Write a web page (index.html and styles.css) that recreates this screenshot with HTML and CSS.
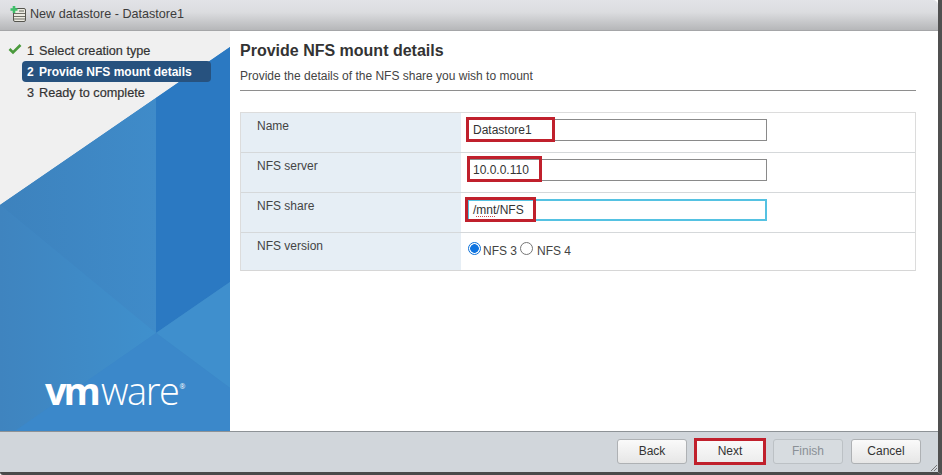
FILE: index.html
```html
<!DOCTYPE html>
<html lang="en">
<head>
<meta charset="utf-8">
<title>New datastore - Datastore1</title>
<link rel="stylesheet" href="styles.css">
</head>
<body>
<div class="dialog">
  <header class="titlebar">
    <svg class="title-icon" width="18" height="18" viewBox="0 0 18 18">
      <rect x="4.5" y="3.5" width="12" height="13" rx="1.5" fill="#ecebe2" stroke="#55554e"/>
      <path d="M5 8.5h11M5 11.5h11M5 14h11" stroke="#6f6f67" fill="none"/>
      <rect x="10" y="5" width="5" height="2" fill="#a9a99f"/>
      <path d="M5 1v7M1.5 4.5h7" stroke="#3fbf6a" stroke-width="2.6" fill="none"/>
    </svg>
    <span>New datastore - Datastore1</span>
  </header>
  <div class="body">
    <aside class="sidebar">
      <svg class="art" width="230" height="400" viewBox="0 0 230 400">
        <defs>
          <linearGradient id="upper" x1="0" x2="1" y1="0" y2="0">
            <stop offset="0" stop-color="#3d82bd"/><stop offset="1" stop-color="#3f8bc9"/>
          </linearGradient>
          <linearGradient id="lower" x1="0" x2="1" y1="0" y2="0">
            <stop offset="0" stop-color="#3f84bf"/><stop offset="1" stop-color="#3f90cd"/>
          </linearGradient>
        </defs>
        <polygon points="0,174 230,16 230,400 0,400" fill="#3d87c6"/>
        <polygon points="0,174 156,67 156,302" fill="url(#upper)"/>
        <polygon points="0,174 156,302 15,400 0,400" fill="url(#lower)"/>
        <polygon points="156,67 230,16 230,251 156,302" fill="#2b79c2"/>
        <polygon points="156,302 230,251 230,357" fill="#3f8fcd"/>
        <polygon points="156,302 230,357 230,400 15,400" fill="#3b88ca"/>
      </svg>
      <ol class="steps">
        <li class="step done">
          <svg class="check" width="14" height="12" viewBox="0 0 14 12"><path d="M1.5 6l3.5 3.5L12.5 2" fill="none" stroke="#4a9a3c" stroke-width="2.6"/></svg>
          <span class="num">1</span><span>Select creation type</span>
        </li>
        <li class="step current"><span class="num">2</span><span>Provide NFS mount details</span></li>
        <li class="step"><span class="num">3</span><span>Ready to complete</span></li>
      </ol>
      <div class="logo"><span class="vm">vm</span><span class="ware">ware</span><sup class="reg">®</sup></div>
    </aside>
    <main class="content">
      <h1 class="heading">Provide NFS mount details</h1>
      <p class="subhead">Provide the details of the NFS share you wish to mount</p>
      <div class="form">
        <div class="row">
          <div class="label">Name</div>
          <div class="field">
            <div class="input">Datastore1</div>
            <i class="mark mark-name"></i>
          </div>
        </div>
        <div class="row">
          <div class="label">NFS server</div>
          <div class="field">
            <div class="input">10.0.0.110</div>
            <i class="mark mark-server"></i>
          </div>
        </div>
        <div class="row">
          <div class="label">NFS share</div>
          <div class="field">
            <div class="input focused">/<span class="typo">mnt</span>/NFS</div>
            <i class="mark mark-share"></i>
          </div>
        </div>
        <div class="row last">
          <div class="label">NFS version</div>
          <div class="field radios">
            <span class="radio on"></span><span class="radio-text">NFS 3</span>
            <span class="radio off"></span><span class="radio-text">NFS 4</span>
          </div>
        </div>
      </div>
    </main>
  </div>
  <footer class="footer">
    <button class="btn">Back</button>
    <button class="btn next">Next</button>
    <button class="btn disabled">Finish</button>
    <button class="btn cancel">Cancel</button>
    <svg class="grip" width="7" height="7" viewBox="0 0 7 7"><path d="M1 7l6-6M4 7l3-3" stroke="#777" fill="none"/></svg>
  </footer>
</div>
</body>
</html>
```
FILE: styles.css
```css
* { box-sizing: border-box; }
html, body { margin: 0; height: 100%; }
body {
  background: #fff;
  font-family: "Liberation Sans", Arial, sans-serif;
  color: #333;
  overflow: hidden;
}
.dialog {
  width: 942px;
  height: 475px;
  display: flex;
  flex-direction: column;
  background: #fff;
  border-right: 4px solid #505050;
  border-bottom: 3px solid #4a4a4a;
  border-bottom-left-radius: 3px;
}
.titlebar {
  height: 31px;
  flex: none;
  display: flex;
  align-items: center;
  gap: 3px;
  padding: 0 0 2px 9px;
  font-size: 12.6px;
  color: #3c3c3c;
  background: linear-gradient(#e2e3e7, #dcdde0 40%, #b6b7b9);
  border-bottom: 1px solid #a5a6a8;
  border-top-right-radius: 5px;
}
.title-icon { flex: none; }
.body { flex: 1; display: flex; min-height: 0; }
.sidebar {
  width: 230px;
  flex: none;
  position: relative;
  background: #f0f0f0;
}
.art { position: absolute; left: 0; top: 0; }
.steps {
  position: relative;
  list-style: none;
  margin: 0;
  padding: 9px 0 0 22px;
  font-size: 12.7px;
}
.step {
  position: relative;
  height: 21px;
  width: 189px;
  display: flex;
  align-items: center;
  padding-left: 5px;
  color: #333;
  -webkit-text-stroke: 0.2px currentColor;
}
.step.current {
  background: #27527f;
  color: #fff;
  font-size: 12px;
  font-weight: bold;
  border-radius: 4px;
  -webkit-text-stroke: 0;
}
.num { width: 12px; flex: none; }
.check { position: absolute; left: -14px; top: 3px; }
.logo {
  position: absolute;
  left: 45px;
  top: 334px;
  color: #fff;
  display: flex;
  font-family: "Open Sans", sans-serif;
  font-size: 38px;
  line-height: 50px;
}
.vm { font-weight: 700; letter-spacing: -3px; }
.ware { font-weight: 300; letter-spacing: -1.4px; margin-left: 3px; }
.reg { font-size: 7px; line-height: 10px; margin: 17px 0 0 1px; }
.content { flex: 1; padding: 10px 22px 0 10px; }
.heading { margin: 0; font-size: 16px; line-height: 20px; font-weight: bold; color: #333; }
.subhead {
  margin: 8px 0 0;
  padding-bottom: 7px;
  font-size: 12px;
  line-height: 14px;
  color: #444;
  border-bottom: 1px solid #8e8e8e;
}
.form { margin-top: 21px; border: 1px solid #dcdcdc; border-bottom-color: #d6d6d6; }
.row { display: flex; height: 40px; border-bottom: 1px solid #d5d8da; }
.row.last { height: 37px; border-bottom: 0; }
.label {
  width: 220px;
  flex: none;
  background: #e6eef5;
  padding: 6px 0 0 16px;
  font-size: 12px;
  line-height: 14px;
  color: #444;
}
.field { position: relative; flex: 1; padding: 6px 0 0 6px; }
.input {
  width: 300px;
  height: 22px;
  border: 1px solid #8a8a8a;
  border-left-color: #a0a0a0;
  padding: 0 5px;
  font-size: 12px;
  line-height: 21px;
  color: #333;
}
.input.focused { border: 2px solid #55c2e2; line-height: 19px; padding: 0 4px; }
.typo {
  background: repeating-linear-gradient(90deg, #c94a4a 0 1px, transparent 1px 2px) 0 100% / 100% 1px no-repeat;
}
.mark { position: absolute; display: block; border: 3px solid #c0202c; }
.mark-name { left: 5px; top: 4px; width: 89px; height: 25px; }
.mark-server { left: 6px; top: 3px; width: 75px; height: 26px; }
.mark-share { left: 4px; top: 4px; width: 71px; height: 25px; }
.radios { display: flex; align-items: center; padding: 0 0 4px 6px; font-size: 12px; color: #444; }
.radio {
  width: 13px;
  height: 13px;
  flex: none;
  border-radius: 50%;
  border: 1px solid #767676;
  background: #fff;
  margin: -3px 1px 0 1px;
}
.radio.on { border: 1px solid #0a6fd8; background: radial-gradient(circle, #0f74e0 0 4px, #fff 4.6px); }
.radio.off { margin-right: 3px; }
.radio-text { margin: 0 0 -3px 1px; }
.radio-text + .radio { margin-left: 3px; }
.footer {
  height: 41px;
  flex: none;
  position: relative;
  display: flex;
  justify-content: flex-end;
  align-items: center;
  gap: 7px;
  padding: 0 17px 2px 0;
  background: #d1d6db;
  border-top: 1px solid #8d9296;
}
.btn {
  width: 70px;
  height: 25px;
  padding: 0;
  font: 12px "Liberation Sans", Arial, sans-serif;
  color: #333;
  background: linear-gradient(#fafafa, #e6e6e6);
  border: 1px solid #aeb1b4;
  border-radius: 3px;
}
.btn.next { border: 3px solid #c0202c; border-radius: 0; width: 72px; height: 27px; background: linear-gradient(#fafafa, #ececec); }
.btn.disabled { color: #8a9096; background: #d7dce0; border-color: #bcc1c5; }
.btn.cancel { margin-left: 1px; }
.grip { position: absolute; right: 1px; bottom: 1px; }
```
